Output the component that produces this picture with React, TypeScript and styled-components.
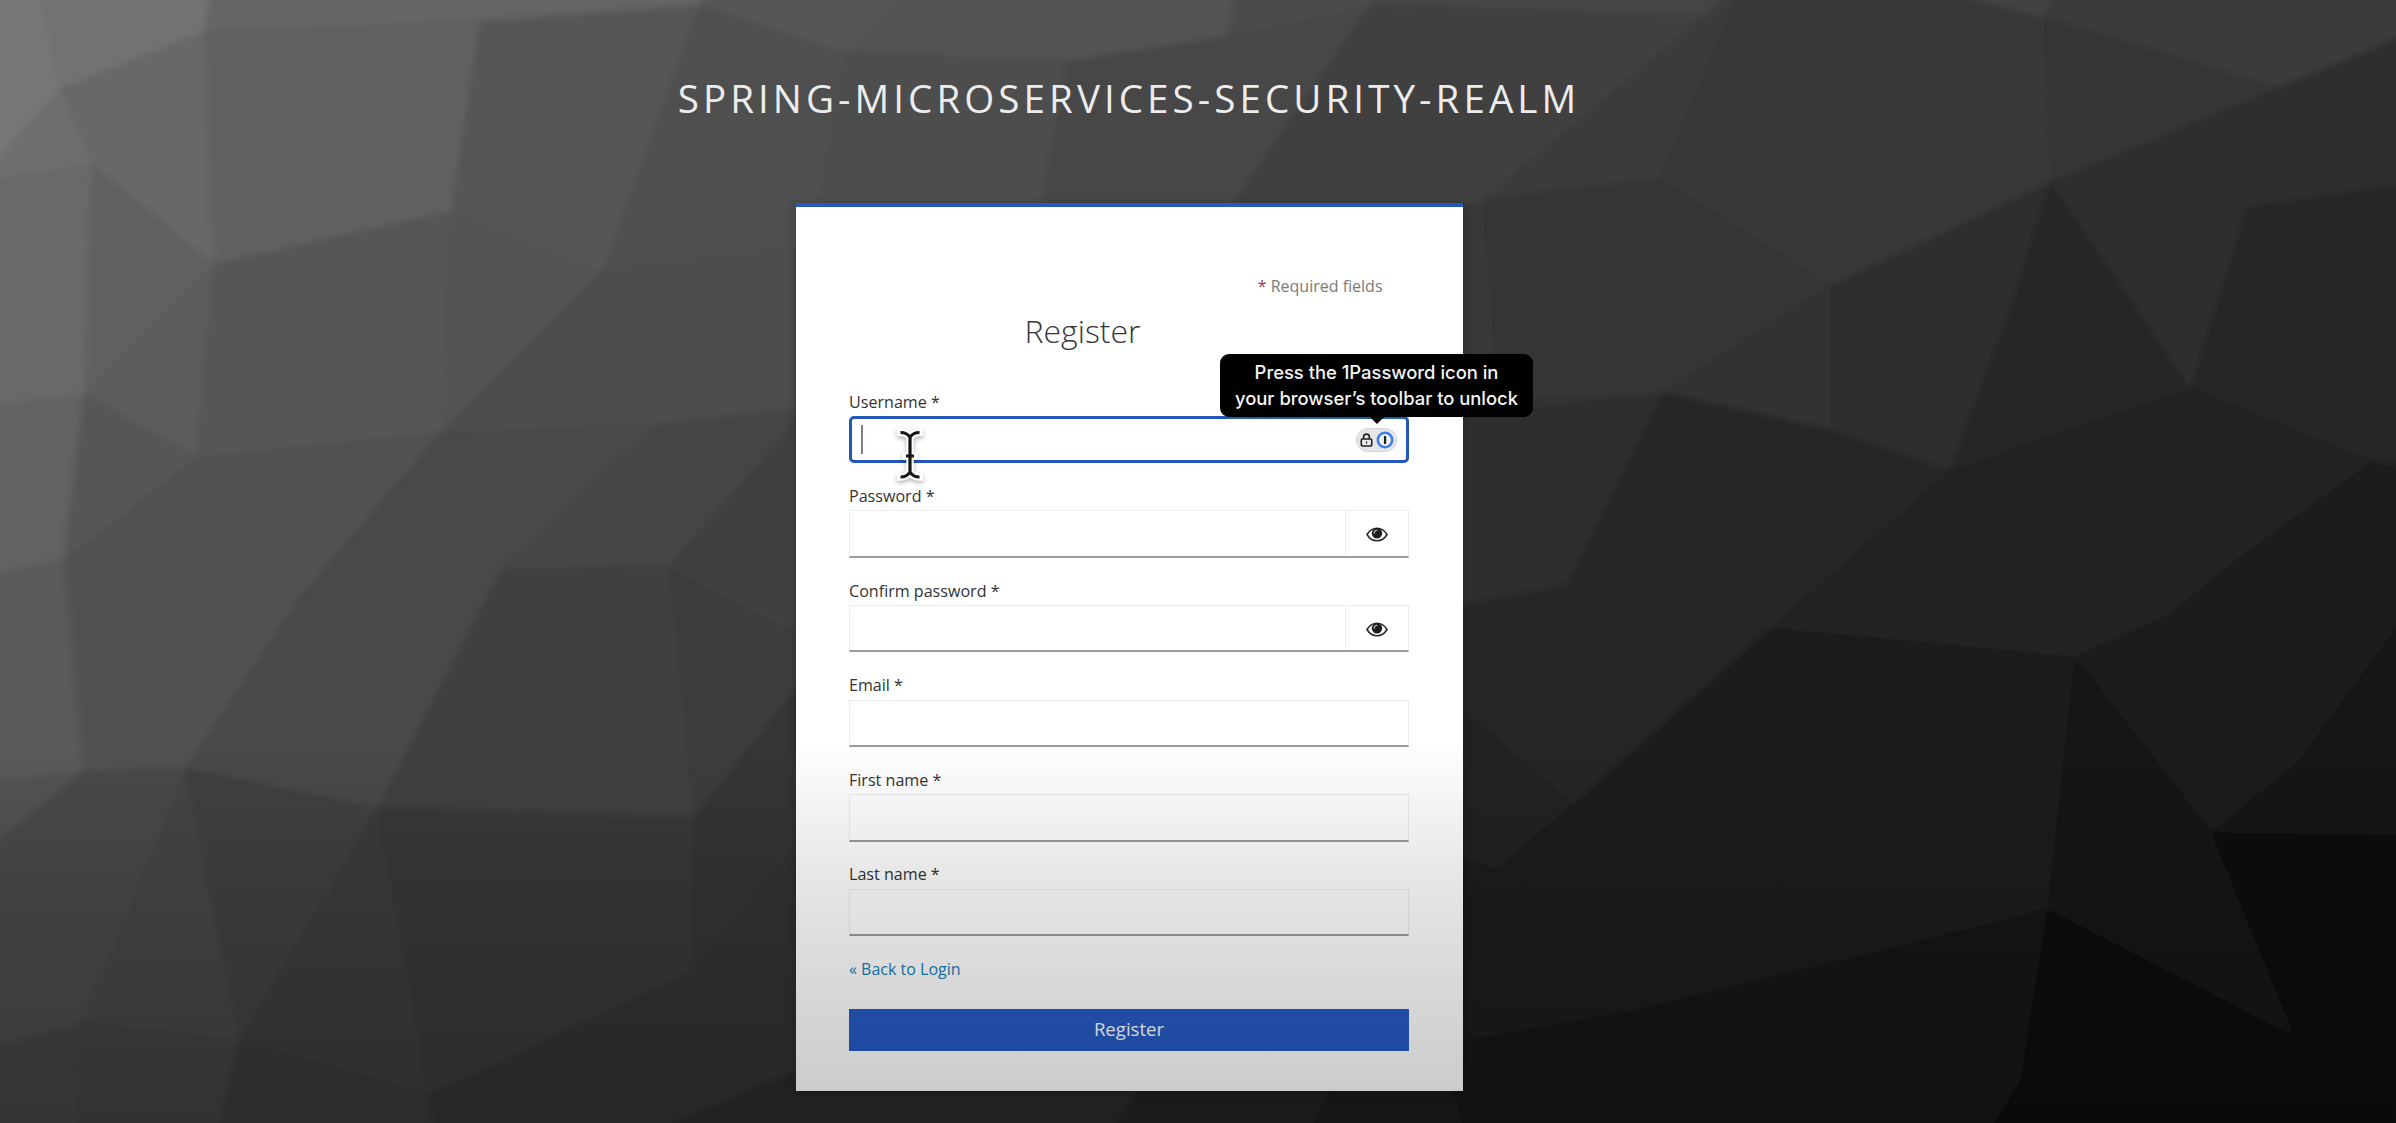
import React from "react";
import styled, { createGlobalStyle } from "styled-components";

const GlobalStyle = createGlobalStyle`
  * { box-sizing: border-box; }
  html, body { margin: 0; padding: 0; background: #1c1c1c; }
  body { font-family: "Open Sans", "Noto Sans", sans-serif; overflow: hidden; }
`;

const Page = styled.main`
  position: relative;
  width: 2396px;
  height: 1123px;
  overflow: hidden;
  display: flex;
  flex-direction: column;
  align-items: center;
  padding: 68px 138px 0 0;
`;

const Backdrop = styled.svg`
  position: absolute;
  inset: 0;
  width: 100%;
  height: 100%;
`;

const BottomShade = styled.div`
  position: absolute;
  inset: 740px 0 0 0;
  background: linear-gradient(
    rgba(0, 0, 0, 0) 0%,
    rgba(0, 0, 0, 0.04) 14%,
    rgba(0, 0, 0, 0.1) 38%,
    rgba(0, 0, 0, 0.16) 68%,
    rgba(0, 0, 0, 0.215) 100%
  );
  pointer-events: none;
`;

const RealmTitle = styled.h1`
  position: relative;
  margin: 0 0 75px;
  height: 60px;
  line-height: 60px;
  font-size: 38.6px;
  font-weight: 400;
  letter-spacing: 4.05px;
  color: #ececec;
  text-transform: uppercase;
  white-space: nowrap;
`;

const Card = styled.section`
  position: relative;
  width: 667px;
  height: 888px;
  padding: 67px 53.5px 0;
  background: #fff;
  border-top: 4px solid #2459bd;
  box-shadow: 0 2px 8px 1px rgba(0, 0, 0, 0.22);
`;

const RequiredNote = styled.div`
  padding-right: 26.5px;
  height: 24px;
  line-height: 24px;
  font-size: 16px;
  color: #7a7a7a;
  text-align: right;
  span { color: #a8323c; }
`;

const FormTitle = styled.h2`
  margin: 11px 93px 37.5px 0;
  height: 44px;
  line-height: 44px;
  font-size: 32px;
  font-weight: 300;
  color: #363636;
  text-align: center;
`;

const Form = styled.div`
  display: flex;
  flex-direction: column;
`;

const Field = styled.div`
  display: flex;
  flex-direction: column;
  height: 94.6px;
`;

const Label = styled.label`
  height: 22px;
  line-height: 22px;
  margin-bottom: 3.4px;
  font-size: 16.1px;
  color: #333;
`;

const InputBox = styled.div<{ $focused?: boolean }>`
  position: relative;
  display: flex;
  align-items: center;
  justify-content: space-between;
  height: 47.4px;
  border: ${(p) => (p.$focused ? "3px solid #2358b8" : "1.4px solid #ededed")};
  border-bottom: ${(p) => (p.$focused ? "3px solid #2358b8" : "2px solid #9b9b9b")};
  border-radius: ${(p) => (p.$focused ? "5px" : "0")};
  padding: ${(p) => (p.$focused ? "0 9px 0 9px" : "0")};
`;

const Caret = styled.span`
  width: 2px;
  height: 29px;
  background: #808080;
`;

const EyeButton = styled.span`
  display: flex;
  align-items: center;
  justify-content: center;
  margin-left: auto;
  width: 63px;
  height: 100%;
  padding-top: 2px;
  border-left: 1.4px solid #ededed;
`;

const PasswordPill = styled.span`
  display: flex;
  align-items: center;
  justify-content: center;
  gap: 3px;
  width: 41px;
  height: 24px;
  border-radius: 12px;
  border: 1px solid #d4d4d8;
  background: #e6e6e9;
`;

const Tooltip = styled.div`
  position: absolute;
  left: 368px;
  top: -64.500px;
  z-index: 2;
  width: 313px;
  height: 62.5px;
  padding-top: 6px;
  border-radius: 9px;
  background: #000;
  color: #f5f5f5;
  font-family: Inter, sans-serif;
  font-size: 18.4px;
  font-weight: 500;
  line-height: 25.2px;
  text-align: center;
  white-space: pre;
  &::after {
    content: "";
    position: absolute;
    left: 149px;
    top: 62px;
    border: 8px solid transparent;
    border-top-color: #000;
    border-bottom: 0;
  }
`;

const Pointer = styled.svg`
  position: absolute;
  left: 42px;
  top: 8.5px;
  width: 32px;
  height: 58px;
  filter: drop-shadow(0 2px 2px rgba(0, 0, 0, 0.3));
`;

const BackLink = styled.a`
  height: 22px;
  line-height: 22px;
  font-size: 16px;
  color: #1780b9;
`;

const SubmitButton = styled.button`
  margin: 29.3px 0 0;
  height: 41.5px;
  border: 0;
  padding: 0 0 2.5px;
  background: #265bc6;
  color: #fff;
  font-family: inherit;
  font-size: 18.6px;
  line-height: 39px;
`;

type Facet = [points: string, gray: number];

/* Low-poly backdrop facets, lightest in the upper left corner. */
const facets: Facet[] = [
  ["0,0 36,0 61,89 0,182", 118],
  ["36,0 215,0 204,32 61,89", 114],
  ["61,89 92,164 0,182", 110],
  ["61,89 204,32 214,264 92,164", 103],
  ["215,0 480,0 720,0 699,5 480,21 204,32", 101],
  ["0,182 92,164 84,395 0,407", 105],
  ["92,164 214,264 84,395", 97],
  ["204,32 480,21 451,211 214,264", 96],
  ["480,21 699,5 602,271 451,211", 87],
  ["720,0 926,0 847,53 699,5", 87],
  ["699,5 847,53 810,246 602,271", 80],
  ["926,0 1240,0 1226,37 1068,62 847,53", 82],
  ["1240,0 1380,0 1369,7 1226,37", 76],
  ["847,53 1068,62 1040,215 810,246", 77],
  ["1068,62 1226,37 1369,7 1225,215 1040,215", 71],
  ["1369,7 1439,143 1484,200 1470,240 1225,215", 64],
  ["1380,0 1747,0 1704,17 1369,7", 68],
  ["1369,7 1704,17 1484,200 1439,143", 63],
  ["1704,17 1747,0 1660,179 1484,200", 59],
  ["1747,0 1890,0 2045,18 2051,182 1830,286 1660,179", 55],
  ["1890,0 2060,0 2045,18", 66],
  ["2060,0 2396,0 2396,29 2278,88 2045,18", 58],
  ["2045,18 2278,88 2051,182", 52],
  ["2396,29 2396,182 2248,207 2051,182 2278,88", 46],
  ["84,395 214,264 196,457", 92],
  ["214,264 451,211 441,432 196,457", 87],
  ["451,211 602,271 441,432", 83],
  ["602,271 810,246 810,407 658,425 441,432", 78],
  ["0,407 84,395 64,560 0,578", 98],
  ["84,395 196,457 64,560", 86],
  ["196,457 441,432 301,596 64,560", 81],
  ["64,560 301,596 186,768 82,772", 81],
  ["0,578 64,560 82,772 0,783", 90],
  ["441,432 658,425 500,571 301,596", 74],
  ["658,425 810,407 668,567 500,571", 68],
  ["810,407 810,640 668,567", 64],
  ["301,596 500,571 378,808 186,768", 73],
  ["500,571 668,567 694,818 378,808", 65],
  ["668,567 810,640 810,670 694,818", 61],
  ["82,772 186,768 82,1023 0,1052 0,858", 74],
  ["0,783 82,772 0,858", 83],
  ["186,768 240,1041 82,1023", 69],
  ["186,768 378,808 240,1041", 65],
  ["378,808 429,1095 240,1041", 58],
  ["378,808 694,818 689,973 429,1095", 56],
  ["694,818 810,670 810,830 689,973", 54],
  ["0,1052 82,1023 78,1123 0,1123", 67],
  ["82,1023 240,1041 215,1123 78,1123", 63],
  ["240,1041 429,1095 435,1123 215,1123", 55],
  ["689,973 620,1123 435,1123 429,1095", 50],
  ["689,973 810,830 810,1065 620,1123", 48],
  ["620,1123 810,1065 1150,1075 1100,1123", 41],
  ["1100,1123 1150,1075 1350,1060 1300,1123", 32],
  ["1300,1123 1350,1060 1450,1040 1470,1123", 26],
  ["1455,210 1484,200 1500,400 1440,420", 57],
  ["1484,200 1660,179 1663,393 1500,400", 52],
  ["1660,179 1830,286 1663,393", 52],
  ["1830,286 2051,182 1950,471 1830,430", 45],
  ["1663,393 1830,286 1830,430", 48],
  ["2051,182 2191,389 1950,471 2010,310", 40],
  ["2051,182 2248,207 2191,389", 46],
  ["2248,207 2396,182 2396,470 2373,461", 39],
  ["2248,207 2373,461 2191,389", 38],
  ["1440,420 1663,393 1567,585 1440,610", 46],
  ["1663,393 1830,430 1950,471 1770,628 1567,585", 40],
  ["1950,471 2191,389 2373,461 2236,560 2170,614 2075,657 1770,628", 35],
  ["2373,461 2396,470 2396,596 2236,560", 29],
  ["1440,610 1567,585 1573,804 1440,690", 40],
  ["1567,585 1770,628 1573,804", 39],
  ["1440,690 1573,804 1496,869 1440,850", 36],
  ["1770,628 2075,657 1759,883 1573,804", 31],
  ["2075,657 2048,910 1759,883", 28],
  ["2075,657 2170,614 2236,560 2396,596 2300,760 2212,833", 27],
  ["2075,657 2212,833 2048,910", 25],
  ["2396,596 2396,836 2212,833 2300,760", 21],
  ["1440,850 1496,869 1573,804 1645,1009 1440,1045", 30],
  ["1573,804 1759,883 1645,1009", 28],
  ["1759,883 2048,910 1645,1009", 26],
  ["1440,1045 1645,1009 1640,1123 1470,1123", 23],
  ["1645,1009 2048,910 2021,1081 1980,1123 1640,1123", 19],
  ["2048,910 2212,833 2296,1038", 20],
  ["2048,910 2296,1038 2300,1123 1980,1123 2021,1081", 13],
  ["2212,833 2396,836 2396,1123 2300,1123 2296,1038", 14],
];

/* Push border vertices past the viewport so the soft edges stay inside it. */
const bleed = (points: string) =>
  points
    .split(" ")
    .map((pair) => {
      const [x, y] = pair.split(",").map(Number);
      const bx = x === 0 ? -24 : x === 2396 ? 2420 : x;
      const by = y === 0 ? -24 : y === 1123 ? 1147 : y;
      return `${bx},${by}`;
    })
    .join(" ");

const FacetBackdrop = () => (
  <Backdrop viewBox="0 0 2396 1123" preserveAspectRatio="none">
    <defs>
      <filter id="soften" filterUnits="userSpaceOnUse" x="-24" y="-24" width="2444" height="1171">
        <feGaussianBlur stdDeviation="3.2" />
      </filter>
    </defs>
    <g filter="url(#soften)">
      <rect x="-24" y="-24" width="2444" height="1171" fill="#303030" />
      {facets.map(([points, g]) => {
        const c = `rgb(${g},${g},${g})`;
        return <polygon key={points} points={bleed(points)} fill={c} stroke={c} strokeWidth="1" />;
      })}
    </g>
  </Backdrop>
);

const EyeIcon = () => (
  <svg width="22" height="15" viewBox="0 0 22 15">
    <path d="M1 7.5C3.4 3.4 7 1.2 11 1.2s7.6 2.200 10 6.300c-2.400 4.100-6 6.300-10 6.300S3.400 11.600 1 7.500Z" fill="#fff" stroke="#2b2b2b" strokeWidth="1.600" />
    <circle cx="11" cy="6.200" r="5.200" fill="#1d1d1d" />
    <path d="M8.200 6.200A2.900 2.900 0 0 1 11 3.300" fill="none" stroke="#bbb" strokeWidth="1.100" strokeLinecap="round" />
  </svg>
);

const LockIcon = () => (
  <svg width="13" height="14" viewBox="0 0 13 14">
    <path d="M3.600 6V4a2.900 2.900 0 0 1 5.800 0v2" fill="none" stroke="#222" strokeWidth="1.600" />
    <rect x="1.300" y="6" width="10.400" height="7" rx="1" fill="#ececee" stroke="#222" strokeWidth="1.600" />
    <rect x="5.900" y="8.300" width="1.300" height="2.500" fill="#444" />
  </svg>
);

const OnePasswordIcon = () => (
  <svg width="18" height="18" viewBox="0 0 18 18">
    <circle cx="9" cy="9" r="7.200" fill="#f4f6fb" stroke="#3f7fe6" strokeWidth="2.600" />
    <rect x="7.900" y="5" width="2.300" height="8" rx=".5" fill="#222" />
  </svg>
);

const TextPointer = () => (
  <Pointer viewBox="0 0 32 58">
    {[
      { color: "#fff", width: 7.5 },
      { color: "#161616", width: 3.2 },
    ].map((s) => (
      <path
        key={s.color}
        d="M6.500 5.500C11 5.500 14 7 16 10.500C18 7 21 5.500 25.500 5.500M16 10.500V45M6.500 50C11 50 14 48.500 16 45C18 48.500 21 50 25.500 50M12 29H20"
        fill="none"
        stroke={s.color}
        strokeWidth={s.width}
        strokeLinecap={s.width > 5 ? "square" : "butt"}
      />
    ))}
  </Pointer>
);

const fields = [
  { label: "Username", kind: "focused" },
  { label: "Password", kind: "secret" },
  { label: "Confirm password", kind: "secret" },
  { label: "Email", kind: "plain" },
  { label: "First name", kind: "plain" },
  { label: "Last name", kind: "plain" },
];

export default function App() {
  return (
    <>
      <GlobalStyle />
      <Page>
        <FacetBackdrop />
        <RealmTitle>spring-microservices-security-realm</RealmTitle>
        <Card>
          <RequiredNote>
            <span>*</span> Required fields
          </RequiredNote>
          <FormTitle>Register</FormTitle>
          <Form>
            {fields.map(({ label, kind }) => (
              <Field key={label}>
                <Label>{label} *</Label>
                <InputBox $focused={kind === "focused"}>
                  {kind === "focused" && (
                    <>
                      <Caret />
                      <PasswordPill>
                        <LockIcon />
                        <OnePasswordIcon />
                      </PasswordPill>
                      <Tooltip>{"Press the 1Password icon in\nyour browser’s toolbar to unlock"}</Tooltip>
                      <TextPointer />
                    </>
                  )}
                  {kind === "secret" && (
                    <EyeButton>
                      <EyeIcon />
                    </EyeButton>
                  )}
                </InputBox>
              </Field>
            ))}
            <BackLink>« Back to Login</BackLink>
            <SubmitButton>Register</SubmitButton>
          </Form>
        </Card>
        <BottomShade />
      </Page>
    </>
  );
}
